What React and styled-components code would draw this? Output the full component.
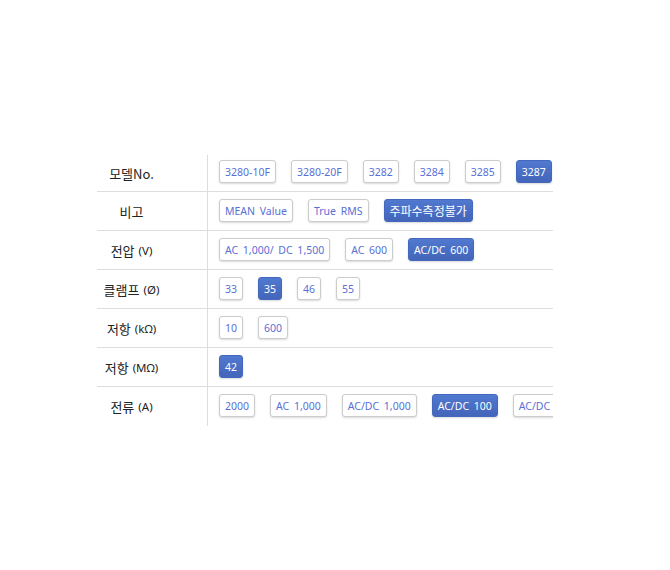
import React from "react"
import styled, { createGlobalStyle } from "styled-components"

const GlobalStyle = createGlobalStyle`
  body {
    margin: 0;
    background: #fff;
    font-family: "Noto Sans", "Noto Sans CJK KR", sans-serif;
  }
`

const Page = styled.div`
  padding: 153px 0 0 97px;
`

const Table = styled.div`
  width: 456px;
  overflow: hidden;
`

const Row = styled.div`
  display: flex;
  height: 39px;
  border-bottom: ${p => (p.last ? "none" : "1px solid #dddddd")};
  box-sizing: border-box;
`

const Label = styled.div`
  flex: 0 0 111px;
  box-sizing: border-box;
  padding-right: 41px;
  border-right: 1px solid #dddddd;
  margin-top: ${p => (p.first ? "2px" : "0")};
  display: flex;
  align-items: center;
  justify-content: center;
  font-family: "Noto Sans CJK KR", sans-serif;
  font-size: 13px;
  font-weight: 400;
  color: #222;
  white-space: nowrap;
`

const Unit = styled.span`
  font-family: "Noto Sans", "Noto Sans CJK KR", sans-serif;
  font-size: 11.5px;
  margin-left: 4px;
`

const Options = styled.div`
  flex: 1;
  display: flex;
  align-items: flex-start;
  gap: 15px;
  padding: 7px 0 0 11px;
  white-space: nowrap;
  overflow: hidden;
`

const Chip = styled.span`
  flex: 0 0 auto;
  display: inline-flex;
  align-items: center;
  justify-content: center;
  box-sizing: border-box;
  height: 23px;
  min-width: 23px;
  padding: 0 5px;
  border-radius: 3px;
  font-family: "Noto Sans", "Noto Sans CJK KR", sans-serif;
  font-size: ${p => (p.hangul ? "12px" : "10.5px")};
  word-spacing: 2px;
  border: 1px solid ${p => (p.active ? "#4368bd" : "#cccccc")};
  background: ${p =>
    p.active ? "linear-gradient(#5079cf, #4365ba)" : "#ffffff"};
  color: ${p => (p.active ? "#ffffff" : "#5a6fd6")};
  box-shadow: 0 1px 2px rgba(0, 0, 0, 0.15);
`

const rows = [
  { label: "모델No.", items: ["3280-10F", "3280-20F", "3282", "3284", "3285", "3287"], active: 5 },
  { label: "비고", items: ["MEAN Value", "True RMS", "주파수측정불가"], active: 2 },
  { label: "전압", unit: "(V)", items: ["AC 1,000/ DC 1,500", "AC 600", "AC/DC 600"], active: 2 },
  { label: "클램프", unit: "(Ø)", items: ["33", "35", "46", "55"], active: 1 },
  { label: "저항", unit: "(kΩ)", items: ["10", "600"], active: -1 },
  { label: "저항", unit: "(MΩ)", items: ["42"], active: 0 },
  { label: "전류", unit: "(A)", items: ["2000", "AC 1,000", "AC/DC 1,000", "AC/DC 100", "AC/DC 600"], active: 3 },
]

const isHangul = s => /[\uac00-\ud7a3]/.test(s)

export default function App() {
  return (
    <Page>
      <GlobalStyle />
      <Table>
        {rows.map((r, i) => (
          <Row key={i} last={i === rows.length - 1}>
            <Label first={i === 0}>
              {r.label}
              {r.unit && <Unit>{r.unit}</Unit>}
            </Label>
            <Options>
              {r.items.map((it, j) => (
                <Chip key={j} active={j === r.active} hangul={isHangul(it)}>
                  {it}
                </Chip>
              ))}
            </Options>
          </Row>
        ))}
      </Table>
    </Page>
  )
}
